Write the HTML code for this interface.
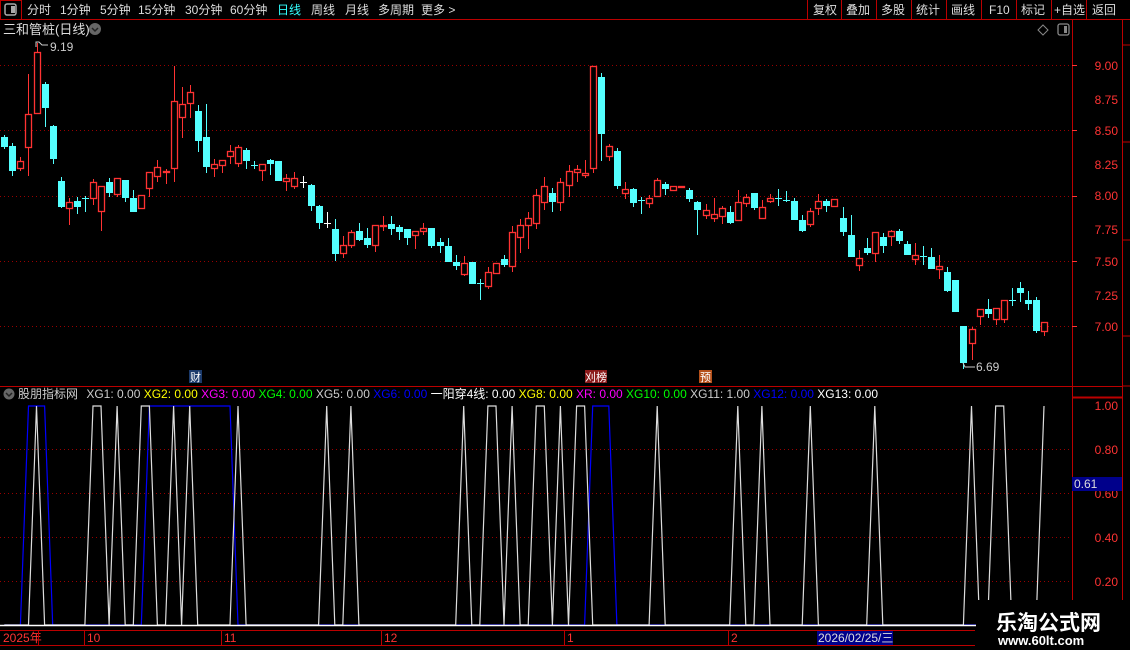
<!DOCTYPE html>
<html><head><meta charset="utf-8"><style>
body{margin:0;background:#000;width:1130px;height:650px;overflow:hidden;font-family:"Liberation Sans","Noto Sans CJK SC",sans-serif;}
svg{position:absolute;left:0;top:0}
text{font-family:"Liberation Sans","Noto Sans CJK SC",sans-serif}
</style></head><body>
<svg id="s" width="1130" height="650" xmlns="http://www.w3.org/2000/svg">
<rect width="1130" height="650" fill="#000"/>
<line x1="0" y1="19.5" x2="1130" y2="19.5" stroke="#b00" />
<rect x="0.5" y="0.5" width="21" height="19" fill="none" stroke="#b00"/>
<rect x="5" y="4" width="11" height="11" rx="2" fill="none" stroke="#aaa" stroke-width="1.5"/><rect x="11" y="6" width="4" height="7" fill="#aaa"/>
<g font-size="12" fill="#ddd">
<text x="27" y="14">分时</text><text x="60" y="14">1分钟</text><text x="100" y="14">5分钟</text><text x="138" y="14">15分钟</text><text x="185" y="14">30分钟</text><text x="230" y="14">60分钟</text>
<text x="277" y="14" fill="#3ff">日线</text><text x="311" y="14">周线</text><text x="345" y="14">月线</text><text x="378" y="14">多周期</text><text x="421" y="14">更多 &gt;</text>
<text x="813" y="14">复权</text><text x="846" y="14">叠加</text><text x="881" y="14">多股</text><text x="916" y="14">统计</text><text x="951" y="14">画线</text><text x="989" y="14">F10</text><text x="1021" y="14">标记</text><text x="1054" y="14">+自选</text><text x="1092" y="14">返回</text>
</g>
<g stroke="#b00"><line x1="807.5" y1="0" x2="807.5" y2="19"/><line x1="841.5" y1="0" x2="841.5" y2="19"/><line x1="876.5" y1="0" x2="876.5" y2="19"/><line x1="911.5" y1="0" x2="911.5" y2="19"/><line x1="946.5" y1="0" x2="946.5" y2="19"/><line x1="981.5" y1="0" x2="981.5" y2="19"/><line x1="1016.5" y1="0" x2="1016.5" y2="19"/><line x1="1051.5" y1="0" x2="1051.5" y2="19"/><line x1="1086.5" y1="0" x2="1086.5" y2="19"/>
<line x1="1072.5" y1="20" x2="1072.5" y2="628"/><line x1="1122.5" y1="20" x2="1122.5" y2="628"/>
<line x1="0" y1="386.5" x2="1122" y2="386.5"/>
<line x1="1072" y1="397.5" x2="1122" y2="397.5" stroke-width="2"/>
<line x1="0" y1="630.5" x2="975" y2="630.5"/><line x1="0" y1="645.5" x2="975" y2="645.5"/>
</g>
<g stroke="#b00"><line x1="1122" y1="45" x2="1130" y2="45"/><line x1="1122" y1="142" x2="1130" y2="142"/><line x1="1122" y1="240" x2="1130" y2="240"/><line x1="1122" y1="336" x2="1130" y2="336"/><line x1="1122" y1="386" x2="1130" y2="386"/></g>
<text x="3" y="34" font-size="13" fill="#ddd">三和管桩(日线)</text>
<circle cx="95" cy="29" r="6" fill="#666"/><path d="M92 28l3 3 3-3" stroke="#222" stroke-width="1.5" fill="none"/>
<path d="M1043 25l5 5-5 5-5-5z" fill="none" stroke="#888"/>
<rect x="1058" y="24" width="11" height="11" rx="2" fill="none" stroke="#888" stroke-width="1.3"/><rect x="1064" y="26" width="3" height="7" fill="#888"/>
<g stroke="#900" stroke-dasharray="1,3"><line x1="0" y1="65.5" x2="1072" y2="65.5"/><line x1="0" y1="130.5" x2="1072" y2="130.5"/><line x1="0" y1="196.5" x2="1072" y2="196.5"/><line x1="0" y1="261.5" x2="1072" y2="261.5"/><line x1="0" y1="326.5" x2="1072" y2="326.5"/>
<line x1="0" y1="449.5" x2="1072" y2="449.5"/><line x1="0" y1="493.5" x2="1072" y2="493.5"/><line x1="0" y1="537.5" x2="1072" y2="537.5"/><line x1="0" y1="581.5" x2="1072" y2="581.5"/></g>
<g font-size="12" fill="#f33" text-anchor="end">
<text x="1118" y="70">9.00</text><text x="1118" y="104">8.75</text><text x="1118" y="135">8.50</text><text x="1118" y="169">8.25</text><text x="1118" y="200">8.00</text><text x="1118" y="234">7.75</text><text x="1118" y="266">7.50</text><text x="1118" y="300">7.25</text><text x="1118" y="331">7.00</text>
<text x="1118" y="410">1.00</text><text x="1118" y="454">0.80</text><text x="1118" y="498">0.60</text><text x="1118" y="542">0.40</text><text x="1118" y="586">0.20</text>
</g>
<g stroke="#f33"><line x1="1072" y1="65.5" x2="1077" y2="65.5"/><line x1="1072" y1="130.5" x2="1077" y2="130.5"/><line x1="1072" y1="196.5" x2="1077" y2="196.5"/><line x1="1072" y1="261.5" x2="1077" y2="261.5"/><line x1="1072" y1="326.5" x2="1077" y2="326.5"/></g>
<rect x="1072" y="477" width="50" height="14" fill="#00008b"/><text x="1074" y="488" font-size="12" fill="#ddd">0.61</text>
<g id="candles"></g>
<g id="ind"></g>
<line x1="0" y1="625.5" x2="1045" y2="625.5" stroke="#fff" stroke-width="1.5"/>
<text x="50" y="51" font-size="12" fill="#ccc">9.19</text><path d="M36 47v-5h3l3 3h6" stroke="#ccc" fill="none"/>
<text x="976" y="371" font-size="12" fill="#ccc">6.69</text><path d="M963 363l2 4h10" stroke="#ccc" fill="none"/>
<rect x="189" y="370" width="13" height="13" fill="#1b3a6b"/><text x="190" y="381" font-size="11" fill="#fff">财</text>
<rect x="585" y="370" width="22" height="13" fill="#8b1a1a"/><text x="585" y="381" font-size="11" fill="#fff">刈榜</text>
<rect x="699" y="370" width="13" height="13" fill="#b5501a"/><text x="700" y="381" font-size="11" fill="#fff">预</text>
<circle cx="9" cy="394" r="5.5" fill="#666"/><path d="M6 393l3 3 3-3" stroke="#222" stroke-width="1.5" fill="none"/>
<text y="398" font-size="12" fill="#ccc"><tspan x="18">股朋指标网</tspan><tspan x="83"> XG1: 0.00</tspan><tspan fill="#ff0"> XG2: 0.00</tspan><tspan fill="#f0f"> XG3: 0.00</tspan><tspan fill="#0f0"> XG4: 0.00</tspan><tspan fill="#ccc"> XG5: 0.00</tspan><tspan fill="#00f"> XG6: 0.00</tspan><tspan fill="#fff"> 一阳穿4线: 0.00</tspan><tspan fill="#ff0"> XG8: 0.00</tspan><tspan fill="#f0f"> XR: 0.00</tspan><tspan fill="#0f0"> XG10: 0.00</tspan><tspan fill="#ccc"> XG11: 1.00</tspan><tspan fill="#00f"> XG12: 0.00</tspan><tspan fill="#fff"> XG13: 0.00</tspan></text>
<g font-size="12" fill="#f33"><text x="3" y="642">2025年</text><text x="87" y="642">10</text><text x="224" y="642">11</text><text x="384" y="642">12</text><text x="567" y="642">1</text><text x="731" y="642">2</text></g>
<g stroke="#b00"><line x1="38.5" y1="631" x2="38.5" y2="645"/><line x1="84.5" y1="631" x2="84.5" y2="645"/><line x1="221.5" y1="631" x2="221.5" y2="645"/><line x1="381.5" y1="631" x2="381.5" y2="645"/><line x1="564.5" y1="631" x2="564.5" y2="645"/><line x1="728.5" y1="631" x2="728.5" y2="645"/></g>
<rect x="817" y="631" width="76" height="14" fill="#00008b"/><text x="818" y="642" font-size="12" fill="#ddd">2026/02/25/三</text>
<rect x="976" y="600" width="154" height="50" fill="#000"/>
<text x="996" y="630" font-size="21" font-weight="bold" fill="#fff">乐淘公式网</text>
<text x="998" y="645" font-size="13" font-weight="bold" fill="#fff" font-family="Liberation Serif,serif">www.60lt.com</text>
</svg>
<script>
var C=[[137,147,135,149,0],[146,171,143,176,0],[161,169,157,171,1],[114,148,74,176,1],[52,114,43,114,1],[84,108,82,127,0],[126,159,125,164,0],[181,207,177,208,0],[202,209,198,225,1],[201,207,197,214,0],[198,198,196,212,0],[182,199,179,205,1],[186,212,186,231,1],[182,193,178,197,0],[178,195,178,197,1],[180,198,180,202,0],[198,212,190,212,0],[195,209,195,209,1],[172,189,172,197,1],[167,177,160,182,1],[171,173,169,184,1],[101,169,66,182,1],[104,118,87,138,1],[92,104,85,118,1],[111,141,105,152,0],[137,167,104,173,0],[164,169,159,177,1],[160,166,160,173,1],[151,157,145,164,1],[147,164,145,167,1],[150,161,148,169,0],[165,165,161,169,0],[164,171,164,181,1],[160,164,159,175,0],[161,181,161,181,0],[178,182,174,191,1],[178,187,172,189,1],[182,182,176,188,2],[185,206,184,211,0],[206,223,205,229,0],[223,223,212,228,2],[229,254,219,261,0],[245,254,236,258,1],[232,246,230,248,1],[231,240,223,241,0],[238,245,228,248,0],[225,246,225,252,1],[225,225,216,231,1],[224,229,216,235,0],[227,232,225,240,0],[229,238,229,245,0],[231,236,231,249,1],[228,232,223,235,1],[228,246,228,248,0],[242,246,238,253,0],[246,262,238,262,0],[262,266,255,270,0],[263,275,256,276,1],[262,284,262,284,0],[283,283,279,300,0],[272,287,267,289,1],[263,274,263,274,1],[259,265,255,267,0],[232,267,226,272,1],[225,238,219,253,1],[218,226,212,249,1],[195,224,189,229,1],[186,203,177,210,1],[193,202,188,212,0],[182,203,178,211,1],[171,186,165,197,1],[169,173,165,182,1],[173,176,160,178,1],[66,169,66,173,1],[77,134,73,161,0],[146,157,144,161,1],[151,186,148,189,0],[189,194,182,199,1],[189,203,188,207,0],[200,200,197,214,0],[198,204,195,208,1],[180,197,178,197,1],[184,189,182,195,0],[186,191,186,191,1],[186,188,186,188,1],[190,199,188,202,0],[202,210,201,235,0],[210,216,204,219,1],[214,219,198,222,1],[208,217,206,224,1],[212,223,206,224,0],[202,221,190,221,1],[197,204,194,207,1],[193,208,193,210,0],[207,219,200,219,1],[198,202,194,203,1],[198,198,189,206,0],[200,200,191,202,0],[201,220,198,220,0],[220,231,215,232,0],[211,225,208,227,1],[201,209,194,215,1],[201,206,199,212,0],[199,207,199,207,1],[218,232,207,236,0],[235,257,215,257,0],[258,266,250,271,1],[248,253,238,255,0],[232,254,232,262,1],[237,246,233,253,0],[231,237,230,246,1],[231,241,229,244,0],[244,255,241,255,0],[255,260,243,265,1],[256,256,246,265,0],[257,269,248,269,0],[266,270,255,279,1],[272,291,267,292,0],[280,312,280,312,0],[326,363,326,369,0],[329,344,327,360,1],[309,317,309,325,1],[309,314,299,318,0],[308,320,308,325,1],[300,320,300,323,1],[300,300,288,306,0],[288,293,282,302,0],[300,304,291,310,0],[300,331,297,333,0],[322,332,322,336,1]];
var h='';function X(i){return 4.3+8.06*i;}
C.forEach(function(c,i){var x=Math.round(X(i)),col=c[4]==1?'#ff3232':(c[4]==2?'#fff':'#54ffff');
h+='<line x1="'+(x+.5)+'" y1="'+c[2]+'" x2="'+(x+.5)+'" y2="'+c[3]+'" stroke="'+col+'"/>';
var bh=Math.max(c[1]-c[0],1);
if(c[4]==1)h+='<rect x="'+(x-2.5)+'" y="'+(c[0]+.5)+'" width="6" height="'+Math.max(bh-1,1)+'" fill="#000" stroke="'+col+'" stroke-width="1.3"/>';
else h+='<rect x="'+(x-3)+'" y="'+c[0]+'" width="7" height="'+bh+'" fill="'+col+'"/>';});
document.getElementById('candles').innerHTML=h;
function series(on,col){var p='';for(var i=0;i<130;i++){var v=on.indexOf(i)>=0?406:625;p+=X(i).toFixed(1)+','+v+' ';}return '<polyline points="'+p+'" fill="none" stroke="'+col+'" stroke-width="1.2"/>';}
var w=[4,11,12,14,17,18,21,23,29,40,43,57,60,61,63,66,67,69,71,72,81,91,94,100,108,120,123,124,129];
var b=[3,4,5,18,19,20,21,22,23,24,25,26,27,28,73,74,75];
document.getElementById('ind').innerHTML=series(b,'#0000ff')+series(w,'#ddd');
</script>
</body></html>
